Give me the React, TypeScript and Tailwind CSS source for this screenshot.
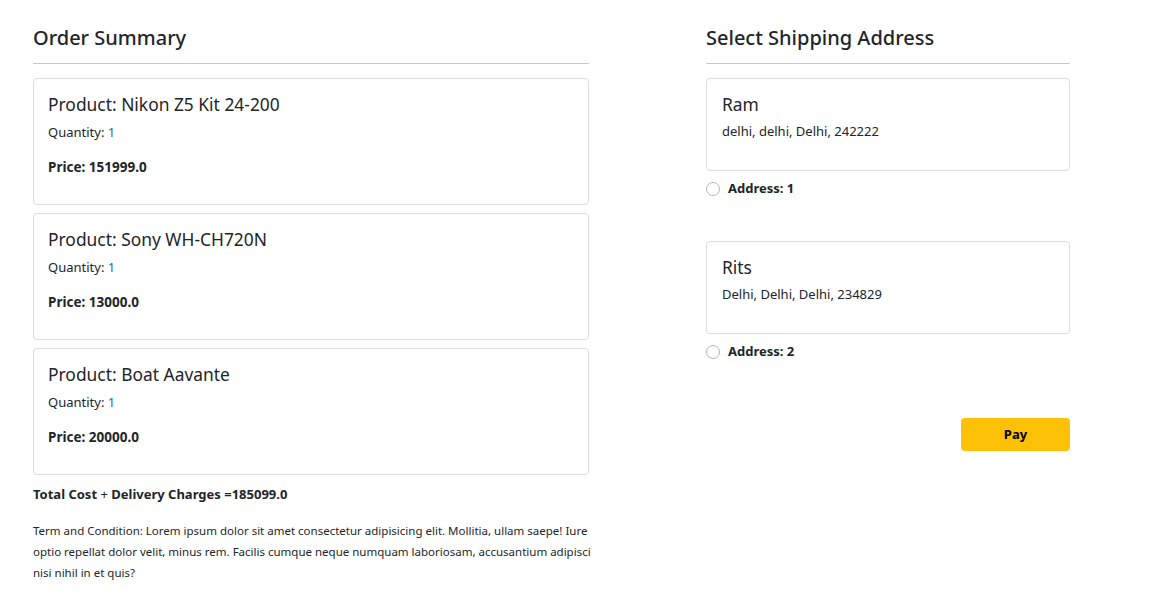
const products = [
  { name: 'Nikon Z5 Kit 24-200', qty: 1, price: '151999.0' },
  { name: 'Sony WH-CH720N', qty: 1, price: '13000.0' },
  { name: 'Boat Aavante', qty: 1, price: '20000.0' },
];

const addresses = [
  { name: 'Ram', line: 'delhi, delhi, Delhi, 242222' },
  { name: 'Rits', line: 'Delhi, Delhi, Delhi, 234829' },
];

// checkout page: order summary + address picker
export default function App() {
  return (
    <div className="min-h-screen bg-white text-[#212529] font-['Noto_Sans',sans-serif]">
      <div className="flex pl-[33px] pt-[24px]">
        <div className="w-[556px]">
          <h2 className="text-[20px] leading-[28px] font-medium">Order Summary</h2>
          <hr className="mt-[11px] border-t border-[#c8c8c8]" />
          <div className="mt-[14px] flex flex-col gap-[8px]">
            {products.map((p) => (
              <div key={p.name} className="h-[127px] rounded border border-[#dcdcdc] px-[14px] pt-[13px]">
                <h3 className="text-[17.4px] leading-[24px]">Product: {p.name}</h3>
                <p className="mt-[6px] text-[13px] leading-[20px]">
                  Quantity: <span className="text-[#2a6d9c]">{p.qty}</span>
                </p>
                <p className="mt-[15px] text-[13.5px] leading-[20px] font-bold">Price: {p.price}</p>
              </div>
            ))}
          </div>
          <p className="mt-[9px] text-[13px] leading-[20px] font-bold">
            Total Cost <span className="font-normal">+</span> Delivery Charges =185099.0
          </p>
          <p className="mt-[16px] w-[568px] text-[11.5px] leading-[21px]">
            Term and Condition: Lorem ipsum dolor sit amet consectetur adipisicing elit. Mollitia, ullam saepe! Iure
            optio repellat dolor velit, minus rem. Facilis cumque neque numquam laboriosam, accusantium adipisci
            nisi nihil in et quis?
          </p>
        </div>

        <div className="ml-[117px] w-[364px]">
          <h2 className="text-[20px] leading-[28px] font-medium">Select Shipping Address</h2>
          <hr className="mt-[11px] border-t border-[#c8c8c8]" />
          <div className="mt-[14px] flex flex-col">
            {addresses.map((a, i) => (
              <div key={a.name} className={i > 0 ? 'mt-[42px]' : ''}>
                <div className="h-[93px] rounded border border-[#dcdcdc] px-[15px] pt-[13px]">
                  <h3 className="text-[17.4px] leading-[24px]">{a.name}</h3>
                  <p className="mt-[5px] text-[13px] leading-[20px]">{a.line}</p>
                </div>
                <label className="mt-[8px] flex items-center gap-[8px] h-[20px]">
                  <span className="inline-block w-[14px] h-[14px] rounded-full border border-[#b5b5b5] bg-white" />
                  <span className="text-[13px] font-bold">Address: {i + 1}</span>
                </label>
              </div>
            ))}
          </div>
          <div className="mt-[56px] flex justify-end">
            <button className="w-[109px] h-[33px] rounded bg-[#ffc107] text-[13px] font-bold text-black">Pay</button>
          </div>
        </div>
      </div>
    </div>
  );
}
